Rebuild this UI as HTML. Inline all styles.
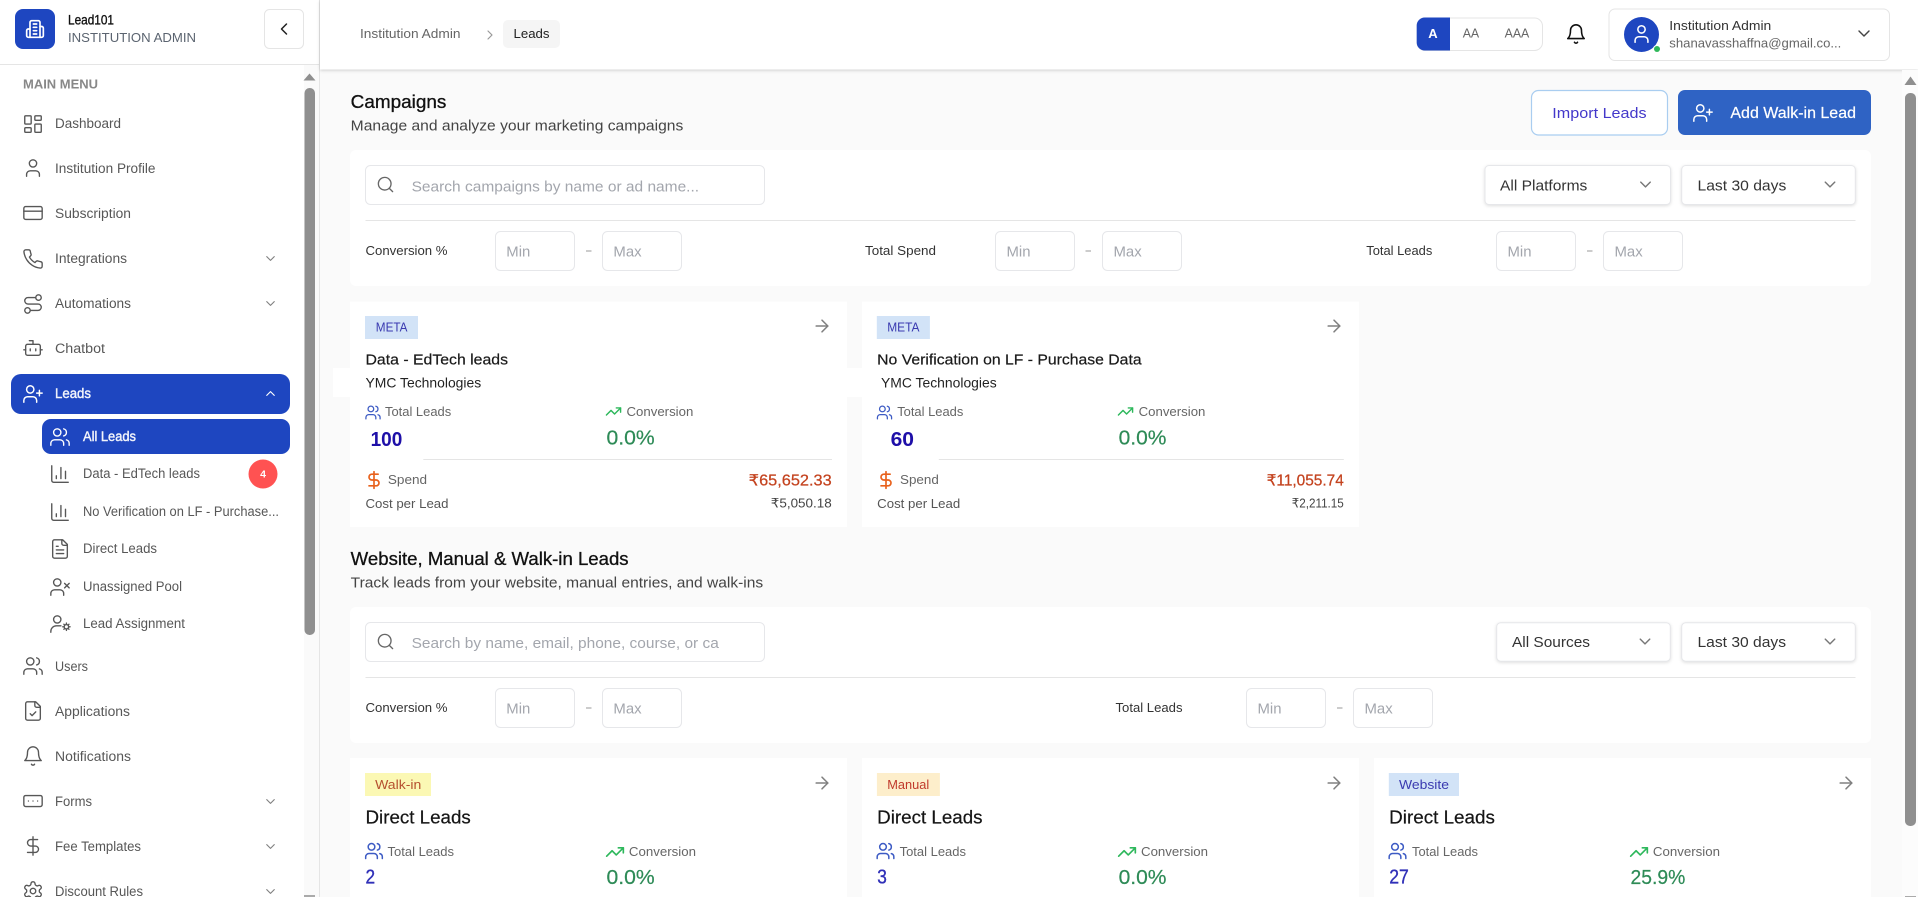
<!DOCTYPE html>
<html lang="en"><head><meta charset="utf-8"><title>Leads</title>
<style>
html,body{margin:0;padding:0;background:#fafafa;width:1918px;height:897px;overflow:hidden}
svg{display:block;font-family:"Liberation Sans",Arial,sans-serif}
text{dominant-baseline:central;white-space:pre}
.ic{fill:none;stroke-linecap:round;stroke-linejoin:round}
.nav{font-size:13.5px;fill:#575757}
.side{stroke:#575757;stroke-width:1.5}
.chev{stroke:#808080;stroke-width:1.8}
.box{fill:#fff;stroke:#e6e7ea;stroke-width:1}
.sel{fill:#fff;stroke:#e6e7ea;stroke-width:1;filter:drop-shadow(0 1px 1.5px rgba(0,0,0,.13))}
.lab{font-size:13px;fill:#333}
.ph{font-size:14.5px;fill:#a3a6ad}
.stat{font-size:13px;fill:#666}
.conv{font-size:20px;fill:#2e8b57;stroke:#2e8b57;stroke-width:.2}
.val{font-size:20px;fill:#3030b8;stroke:#3030b8;stroke-width:.35}
.h2{font-size:18px;fill:#111;stroke:#111;stroke-width:.3}
.sub{font-size:15px;fill:#444}
.ct{font-size:15px;fill:#1a1a1a;stroke:#1a1a1a;stroke-width:.2}
.dl{font-size:18px;fill:#151515;stroke:#151515;stroke-width:.2}
.amt{font-size:15.5px;fill:#c4431f;stroke:#c4431f;stroke-width:.25}
.blue{stroke:#3d5bc4;stroke-width:1.8}
.green{stroke:#2eb85c;stroke-width:2}
.gray{stroke:#808080;stroke-width:1.8}
.orange{stroke:#e8611c;stroke-width:2}
</style></head><body>
<svg xmlns="http://www.w3.org/2000/svg" width="1918" height="897" viewBox="0 0 1918 897">
<defs>
<symbol id="dash" viewBox="0 0 24 24"><rect x="3" y="3" width="7" height="9" rx="1"/><rect x="14" y="3" width="7" height="5" rx="1"/><rect x="14" y="12" width="7" height="9" rx="1"/><rect x="3" y="16" width="7" height="5" rx="1"/></symbol>
<symbol id="user" viewBox="0 0 24 24"><path d="M19 21v-2a4 4 0 0 0-4-4H9a4 4 0 0 0-4 4v2"/><circle cx="12" cy="7" r="4"/></symbol>
<symbol id="card" viewBox="0 0 24 24"><rect x="2" y="5" width="20" height="14" rx="2"/><path d="M2 10h20"/></symbol>
<symbol id="phone" viewBox="0 0 24 24"><path d="M22 16.92v3a2 2 0 0 1-2.18 2 19.79 19.79 0 0 1-8.63-3.07 19.5 19.5 0 0 1-6-6 19.79 19.79 0 0 1-3.07-8.67A2 2 0 0 1 4.11 2h3a2 2 0 0 1 2 1.72 12.84 12.84 0 0 0 .7 2.81 2 2 0 0 1-.45 2.11L8.09 9.91a16 16 0 0 0 6 6l1.27-1.27a2 2 0 0 1 2.11-.45 12.84 12.84 0 0 0 2.81.7A2 2 0 0 1 22 16.92z"/></symbol>
<symbol id="route" viewBox="0 0 24 24"><circle cx="6" cy="19" r="3"/><path d="M9 19h8.5a3.5 3.5 0 0 0 0-7h-11a3.5 3.5 0 0 1 0-7H15"/><circle cx="18" cy="5" r="3"/></symbol>
<symbol id="bot" viewBox="0 0 24 24"><path d="M12 8V4H8"/><rect x="4" y="8" width="16" height="12" rx="2"/><path d="M2 14h2M20 14h2M15 13v2M9 13v2"/></symbol>
<symbol id="uplus" viewBox="0 0 24 24"><path d="M16 21v-2a4 4 0 0 0-4-4H6a4 4 0 0 0-4 4v2"/><circle cx="9" cy="7" r="4"/><path d="M19 8v6M22 11h-6"/></symbol>
<symbol id="users" viewBox="0 0 24 24"><path d="M16 21v-2a4 4 0 0 0-4-4H6a4 4 0 0 0-4 4v2"/><circle cx="9" cy="7" r="4"/><path d="M22 21v-2a4 4 0 0 0-3-3.87"/><path d="M16 3.13a4 4 0 0 1 0 7.75"/></symbol>
<symbol id="chart" viewBox="0 0 24 24"><path d="M3 3v16a2 2 0 0 0 2 2h16"/><path d="M18 17V9M13 17V5M8 17v-3"/></symbol>
<symbol id="file" viewBox="0 0 24 24"><path d="M15 2H6a2 2 0 0 0-2 2v16a2 2 0 0 0 2 2h12a2 2 0 0 0 2-2V7Z"/><path d="M14 2v4a2 2 0 0 0 2 2h4"/><path d="M10 9H8M16 13H8M16 17H8"/></symbol>
<symbol id="filec" viewBox="0 0 24 24"><path d="M15 2H6a2 2 0 0 0-2 2v16a2 2 0 0 0 2 2h12a2 2 0 0 0 2-2V7Z"/><path d="M14 2v4a2 2 0 0 0 2 2h4"/><path d="m9 15 2 2 4-4"/></symbol>
<symbol id="ux" viewBox="0 0 24 24"><path d="M16 21v-2a4 4 0 0 0-4-4H6a4 4 0 0 0-4 4v2"/><circle cx="9" cy="7" r="4"/><path d="m17 8 5 5M22 8l-5 5"/></symbol>
<symbol id="ucog" viewBox="0 0 24 24"><path d="M2 21v-1a6 6 0 0 1 6-6h5"/><circle cx="9" cy="7" r="4"/><circle cx="19" cy="15" r="2.4"/><path d="M19 11v1.2M19 17.8V19M15 15h1.2M21.8 15H23M16.2 12.2l.9.9M20.9 16.9l.9.9M16.2 17.8l.9-.9M20.9 13.1l.9-.9"/></symbol>
<symbol id="bell" viewBox="0 0 24 24"><path d="M6 8a6 6 0 0 1 12 0c0 7 3 9 3 9H3s3-2 3-9"/><path d="M10.3 21a1.94 1.94 0 0 0 3.4 0"/></symbol>
<symbol id="form" viewBox="0 0 24 24"><rect x="2" y="6" width="20" height="12" rx="2"/><path d="M12 12h.01M17 12h.01M7 12h.01"/></symbol>
<symbol id="dollar" viewBox="0 0 24 24"><path d="M12 2v20"/><path d="M17 5H9.5a3.5 3.5 0 0 0 0 7h5a3.5 3.5 0 0 1 0 7H6"/></symbol>
<symbol id="cog" viewBox="0 0 24 24"><path d="M12.22 2h-.44a2 2 0 0 0-2 2v.18a2 2 0 0 1-1 1.73l-.43.25a2 2 0 0 1-2 0l-.15-.08a2 2 0 0 0-2.73.73l-.22.38a2 2 0 0 0 .73 2.73l.15.1a2 2 0 0 1 1 1.72v.51a2 2 0 0 1-1 1.74l-.15.09a2 2 0 0 0-.73 2.73l.22.38a2 2 0 0 0 2.73.73l.15-.08a2 2 0 0 1 2 0l.43.25a2 2 0 0 1 1 1.73V20a2 2 0 0 0 2 2h.44a2 2 0 0 0 2-2v-.18a2 2 0 0 1 1-1.73l.43-.25a2 2 0 0 1 2 0l.15.08a2 2 0 0 0 2.73-.73l.22-.39a2 2 0 0 0-.73-2.73l-.15-.08a2 2 0 0 1-1-1.74v-.5a2 2 0 0 1 1-1.74l.15-.09a2 2 0 0 0 .73-2.73l-.22-.38a2 2 0 0 0-2.73-.73l-.15.08a2 2 0 0 1-2 0l-.43-.25a2 2 0 0 1-1-1.73V4a2 2 0 0 0-2-2z"/><circle cx="12" cy="12" r="3"/></symbol>
<symbol id="build" viewBox="0 0 24 24"><path d="M6 22V4a2 2 0 0 1 2-2h8a2 2 0 0 1 2 2v18Z"/><path d="M6 12H4a2 2 0 0 0-2 2v6a2 2 0 0 0 2 2h2"/><path d="M18 9h2a2 2 0 0 1 2 2v9a2 2 0 0 1-2 2h-2"/><path d="M10 6h4M10 10h4M10 14h4M10 18h4"/></symbol>
<symbol id="trend" viewBox="0 0 24 24"><path d="M22 7l-8.5 8.5-5-5L2 17"/><path d="M16 7h6v6"/></symbol>
<symbol id="arrow" viewBox="0 0 24 24"><path d="M5 12h14"/><path d="m12 5 7 7-7 7"/></symbol>
<symbol id="search" viewBox="0 0 24 24"><circle cx="11" cy="11" r="8"/><path d="m21 21-4.3-4.3"/></symbol>
<symbol id="cd" viewBox="0 0 24 24"><path d="m6 9 6 6 6-6"/></symbol>
<symbol id="cu" viewBox="0 0 24 24"><path d="m18 15-6-6-6 6"/></symbol>
<symbol id="cl" viewBox="0 0 24 24"><path d="m15 18-6-6 6-6"/></symbol>
<symbol id="cr" viewBox="0 0 24 24"><path d="m9 18 6-6-6-6"/></symbol>
</defs>

<rect width="1918" height="897" fill="#fafafa"/>

<!-- SIDEBAR -->
<rect x="0" y="0" width="319" height="897" fill="#fff"/>
<rect x="319" y="0" width="1" height="897" fill="#e5e5e5"/>
<rect x="0" y="64" width="319" height="1" fill="#e5e5e5"/>
<rect x="15" y="9" width="40" height="40" rx="8" fill="#1e46c0"/>
<use href="#build" x="25" y="19" width="20" height="20" class="ic" stroke="#fff" stroke-width="2"/>
<text x="68" y="19.5" textLength="46" lengthAdjust="spacingAndGlyphs" font-size="14" fill="#111" stroke="#111" stroke-width=".35">Lead101</text>
<text x="68" y="37.5" textLength="128" lengthAdjust="spacingAndGlyphs" font-size="13" fill="#5b6470">INSTITUTION ADMIN</text>
<rect x="264.5" y="9.5" width="39" height="39" rx="5" fill="#fff" stroke="#e5e5e5"/>
<use href="#cl" x="274" y="19" width="20" height="20" class="ic" stroke="#222" stroke-width="1.8"/>

<text x="23" y="84.5" textLength="75" lengthAdjust="spacingAndGlyphs" font-size="12.5" font-weight="700" fill="#888">MAIN MENU</text>

<rect x="304" y="65" width="15" height="832" fill="#fafafa"/>
<path d="M303.5 80.5l6-7 6 7z" fill="#8f8f8f"/>
<rect x="304.5" y="88" width="10.5" height="547" rx="5" fill="#8f8f8f"/>
<path d="M304 897v-2h11v2z" fill="#aaa"/>

<use href="#dash" x="22" y="113" width="22" height="22" class="ic side"/>
<text x="55" y="123.5" textLength="66" lengthAdjust="spacingAndGlyphs" class="nav">Dashboard</text>
<use href="#user" x="22" y="157" width="22" height="22" class="ic side"/>
<text x="55" y="168.5" textLength="100.5" lengthAdjust="spacingAndGlyphs" class="nav">Institution Profile</text>
<use href="#card" x="22" y="202" width="22" height="22" class="ic side"/>
<text x="55" y="213.5" textLength="76" lengthAdjust="spacingAndGlyphs" class="nav">Subscription</text>
<use href="#phone" x="22" y="248" width="22" height="22" class="ic side"/>
<text x="55" y="258.5" textLength="72" lengthAdjust="spacingAndGlyphs" class="nav">Integrations</text>
<use href="#cd" x="263" y="251" width="15" height="15" class="ic chev"/>
<use href="#route" x="22" y="293" width="22" height="22" class="ic side"/>
<text x="55" y="303.5" textLength="76" lengthAdjust="spacingAndGlyphs" class="nav">Automations</text>
<use href="#cd" x="263" y="296" width="15" height="15" class="ic chev"/>
<use href="#bot" x="22" y="337" width="22" height="22" class="ic side"/>
<text x="55" y="348.5" textLength="50" lengthAdjust="spacingAndGlyphs" class="nav">Chatbot</text>

<rect x="11" y="374" width="279" height="40" rx="10" fill="#1e46c0"/>
<use href="#uplus" x="22" y="383" width="22" height="22" class="ic" stroke="#fff" stroke-width="1.6"/>
<text x="55" y="393.5" textLength="36" lengthAdjust="spacingAndGlyphs" font-size="13.5" fill="#f2f4fb" stroke="#f2f4fb" stroke-width=".4">Leads</text>
<use href="#cu" x="263" y="386" width="15" height="15" class="ic" stroke="#fff" stroke-width="1.8"/>

<rect x="42" y="419" width="248" height="35" rx="9" fill="#1e46c0"/>
<use href="#users" x="49" y="426" width="22" height="22" class="ic" stroke="#fff" stroke-width="1.5"/>
<text x="83" y="436.5" textLength="53" lengthAdjust="spacingAndGlyphs" font-size="13.5" fill="#f2f4fb" stroke="#f2f4fb" stroke-width=".4">All Leads</text>

<use href="#chart" x="49" y="463" width="22" height="22" class="ic side"/>
<text x="83" y="473.5" textLength="117" lengthAdjust="spacingAndGlyphs" class="nav">Data - EdTech leads</text>
<circle cx="263" cy="474" r="14.5" fill="#ff5252"/>
<text x="263" y="474.5" text-anchor="middle" font-size="10.5" font-weight="700" fill="#fff">4</text>
<use href="#chart" x="49" y="501" width="22" height="22" class="ic side"/>
<text x="83" y="511.5" textLength="196" lengthAdjust="spacingAndGlyphs" class="nav">No Verification on LF - Purchase...</text>
<use href="#file" x="49" y="538" width="22" height="22" class="ic side"/>
<text x="83" y="548.5" textLength="74" lengthAdjust="spacingAndGlyphs" class="nav">Direct Leads</text>
<use href="#ux" x="49" y="576" width="22" height="22" class="ic side"/>
<text x="83" y="586.5" textLength="99" lengthAdjust="spacingAndGlyphs" class="nav">Unassigned Pool</text>
<use href="#ucog" x="49" y="613" width="22" height="22" class="ic side"/>
<text x="83" y="623.5" textLength="102" lengthAdjust="spacingAndGlyphs" class="nav">Lead Assignment</text>

<use href="#users" x="22" y="655" width="22" height="22" class="ic side"/>
<text x="55" y="666.5" textLength="33" lengthAdjust="spacingAndGlyphs" class="nav">Users</text>
<use href="#filec" x="22" y="700" width="22" height="22" class="ic side"/>
<text x="55" y="711.5" textLength="75" lengthAdjust="spacingAndGlyphs" class="nav">Applications</text>
<use href="#bell" x="22" y="745" width="22" height="22" class="ic side"/>
<text x="55" y="756.5" textLength="76" lengthAdjust="spacingAndGlyphs" class="nav">Notifications</text>
<use href="#form" x="22" y="790" width="22" height="22" class="ic side"/>
<text x="55" y="801.5" textLength="37" lengthAdjust="spacingAndGlyphs" class="nav">Forms</text>
<use href="#cd" x="263" y="794" width="15" height="15" class="ic chev"/>
<use href="#dollar" x="22" y="835" width="22" height="22" class="ic side"/>
<text x="55" y="846.5" textLength="86" lengthAdjust="spacingAndGlyphs" class="nav">Fee Templates</text>
<use href="#cd" x="263" y="839" width="15" height="15" class="ic chev"/>
<use href="#cog" x="22" y="880" width="22" height="22" class="ic side"/>
<text x="55" y="891.5" textLength="88" lengthAdjust="spacingAndGlyphs" class="nav">Discount Rules</text>
<use href="#cd" x="263" y="884" width="15" height="15" class="ic chev"/>

<!-- HEADER -->
<rect x="320" y="0" width="1598" height="69.5" fill="#fff" style="filter:drop-shadow(0 1px 1.5px rgba(0,0,0,.18))"/>
<text x="360" y="33.5" textLength="100.5" lengthAdjust="spacingAndGlyphs" font-size="13" fill="#666">Institution Admin</text>
<use href="#cr" x="482" y="27" width="16" height="16" class="ic" stroke="#999" stroke-width="1.8"/>
<rect x="503" y="20" width="57" height="28" rx="5" fill="#f5f5f5"/>
<text x="513.5" y="33.5" textLength="36" lengthAdjust="spacingAndGlyphs" font-size="13" fill="#222">Leads</text>

<rect x="1417" y="18" width="125.5" height="32.5" rx="8" fill="#fff" stroke="#e5e5e5"/>
<path d="M1450 17.5H1424.7a8 8 0 0 0-8 8V42.5a8 8 0 0 0 8 8H1450Z" fill="#1e46c0"/>
<text x="1433" y="33.5" text-anchor="middle" font-size="13" font-weight="700" fill="#fff">A</text>
<text x="1462.7" y="33.5" textLength="16.5" lengthAdjust="spacingAndGlyphs" font-size="12.5" fill="#666">AA</text>
<text x="1504.6" y="33.5" textLength="24.7" lengthAdjust="spacingAndGlyphs" font-size="12.5" fill="#666">AAA</text>
<use href="#bell" x="1565" y="23" width="22" height="22" class="ic" stroke="#111" stroke-width="1.7"/>
<rect x="1609" y="9" width="280.5" height="51.5" rx="6" fill="#fff" stroke="#e5e5e5"/>
<circle cx="1641.5" cy="34.5" r="17.5" fill="#1e46c0"/>
<use href="#user" x="1630.5" y="23" width="22" height="22" class="ic" stroke="#fff" stroke-width="1.7"/>
<circle cx="1657" cy="49" r="4" fill="#fff"/><circle cx="1657" cy="49" r="3" fill="#2fb85a"/>
<text x="1669.3" y="25.5" textLength="102" lengthAdjust="spacingAndGlyphs" font-size="13" fill="#333">Institution Admin</text>
<text x="1669.3" y="43" textLength="172" lengthAdjust="spacingAndGlyphs" font-size="13" fill="#666">shanavasshaffna@gmail.co...</text>
<use href="#cd" x="1854" y="23.5" width="20" height="20" class="ic" stroke="#444" stroke-width="1.7"/>

<!-- RIGHT SCROLLBAR -->
<rect x="1902" y="70" width="16" height="827" fill="#fcfcfc"/>
<path d="M1904.5 85l6-8.5 6 8.5z" fill="#8f8f8f"/>
<rect x="1905" y="93" width="11" height="733" rx="5" fill="#8f8f8f"/>
<path d="M1905 897v-1h11v1z" fill="#aaa"/>

<!-- CAMPAIGNS -->
<text x="350.7" y="102" textLength="95.7" lengthAdjust="spacingAndGlyphs" class="h2">Campaigns</text>
<text x="350.7" y="126" textLength="332.6" lengthAdjust="spacingAndGlyphs" class="sub">Manage and analyze your marketing campaigns</text>

<rect x="1531.5" y="90.5" width="136" height="44.5" rx="7" fill="#fff" stroke="#a9cdf0" stroke-width="1.2"/>
<text x="1552.3" y="113.5" textLength="94.3" lengthAdjust="spacingAndGlyphs" font-size="15" fill="#4338ca">Import Leads</text>
<rect x="1678" y="90" width="193" height="45" rx="7" fill="#2f63c4"/>
<use href="#uplus" x="1692" y="102" width="22" height="22" class="ic" stroke="#fff" stroke-width="1.6"/>
<text x="1730.4" y="113.5" textLength="125.6" lengthAdjust="spacingAndGlyphs" font-size="15.5" fill="#fff" stroke="#fff" stroke-width=".2">Add Walk-in Lead</text>

<rect x="350" y="150" width="1521" height="136" rx="6" fill="#fff"/>
<rect x="365.5" y="165.5" width="399" height="39" rx="5" class="box"/>
<use href="#search" x="376" y="175" width="19" height="19" class="ic" stroke="#666" stroke-width="1.7"/>
<text x="411.6" y="187" textLength="287.5" lengthAdjust="spacingAndGlyphs" class="ph" style="font-size:15px">Search campaigns by name or ad name...</text>

<rect x="1485" y="165.5" width="185.5" height="39" rx="4" class="sel"/>
<text x="1500" y="186" textLength="87.3" lengthAdjust="spacingAndGlyphs" font-size="15" fill="#333">All Platforms</text>
<use href="#cd" x="1636" y="175" width="19" height="19" class="ic" stroke="#777" stroke-width="1.8"/>
<rect x="1681.7" y="165.5" width="173.6" height="39" rx="4" class="sel"/>
<text x="1697.5" y="186" textLength="88.8" lengthAdjust="spacingAndGlyphs" font-size="15" fill="#333">Last 30 days</text>
<use href="#cd" x="1820.5" y="175" width="19" height="19" class="ic" stroke="#777" stroke-width="1.8"/>

<rect x="365.5" y="220" width="1490" height="1" fill="#e5e5e5"/>

<text x="365.5" y="250.5" textLength="82" lengthAdjust="spacingAndGlyphs" class="lab">Conversion %</text>
<rect x="495.5" y="231.5" width="79" height="39" rx="5" class="box"/>
<text x="506.3" y="252.5" textLength="24" lengthAdjust="spacingAndGlyphs" class="ph">Min</text>
<rect x="586" y="250.5" width="5.5" height="1" fill="#999"/>
<rect x="602.5" y="231.5" width="79" height="39" rx="5" class="box"/>
<text x="613.4" y="252.5" textLength="28.2" lengthAdjust="spacingAndGlyphs" class="ph">Max</text>

<text x="865" y="250.5" textLength="71" lengthAdjust="spacingAndGlyphs" class="lab">Total Spend</text>
<rect x="995.5" y="231.5" width="79" height="39" rx="5" class="box"/>
<text x="1006.5" y="252.5" textLength="24" lengthAdjust="spacingAndGlyphs" class="ph">Min</text>
<rect x="1085.5" y="250.5" width="5.5" height="1" fill="#999"/>
<rect x="1102.5" y="231.5" width="79" height="39" rx="5" class="box"/>
<text x="1113.5" y="252.5" textLength="28.2" lengthAdjust="spacingAndGlyphs" class="ph">Max</text>

<text x="1366.3" y="250.5" textLength="66" lengthAdjust="spacingAndGlyphs" class="lab">Total Leads</text>
<rect x="1496.5" y="231.5" width="79" height="39" rx="5" class="box"/>
<text x="1507.5" y="252.5" textLength="24" lengthAdjust="spacingAndGlyphs" class="ph">Min</text>
<rect x="1587" y="250.5" width="5.5" height="1" fill="#999"/>
<rect x="1603.5" y="231.5" width="79" height="39" rx="5" class="box"/>
<text x="1614.5" y="252.5" textLength="28.2" lengthAdjust="spacingAndGlyphs" class="ph">Max</text>

<!-- Campaign cards -->
<rect x="333" y="368" width="529" height="29" fill="#fff"/>
<rect x="350" y="301.5" width="497" height="225.5" fill="#fff"/>
<rect x="365" y="316" width="53" height="23" fill="#d2e3f7"/>
<text x="375.8" y="327.5" textLength="31.7" lengthAdjust="spacingAndGlyphs" font-size="12.5" fill="#3a3ab0">META</text>
<use href="#arrow" x="812" y="316" width="20" height="20" class="ic gray"/>
<text x="365.5" y="360" textLength="142.5" lengthAdjust="spacingAndGlyphs" class="ct">Data - EdTech leads</text>
<text x="365.5" y="382.5" textLength="115.7" lengthAdjust="spacingAndGlyphs" font-size="14" fill="#222">YMC Technologies</text>
<use href="#users" x="364.5" y="404" width="17" height="17" class="ic blue"/>
<text x="385" y="411.5" textLength="66.2" lengthAdjust="spacingAndGlyphs" class="stat">Total Leads</text>
<use href="#trend" x="605" y="403" width="17" height="17" class="ic green"/>
<text x="626.5" y="411.5" textLength="66.8" lengthAdjust="spacingAndGlyphs" class="stat">Conversion</text>
<text x="370.6" y="440" textLength="31.7" lengthAdjust="spacingAndGlyphs" font-size="20" font-weight="700" fill="#1e0fa8">100</text>
<text x="606.5" y="438.5" textLength="48.2" lengthAdjust="spacingAndGlyphs" class="conv">0.0%</text>
<rect x="423.3" y="459" width="408.7" height="1" fill="#e5e5e5"/>
<use href="#dollar" x="364" y="470" width="20" height="20" class="ic orange"/>
<text x="387.9" y="479.5" textLength="39.2" lengthAdjust="spacingAndGlyphs" class="stat">Spend</text>
<text x="748.7" y="481" textLength="83" lengthAdjust="spacingAndGlyphs" class="amt">₹65,652.33</text>
<text x="365.5" y="503.5" textLength="83" lengthAdjust="spacingAndGlyphs" font-size="13" fill="#555">Cost per Lead</text>
<text x="770.8" y="503" textLength="60.9" lengthAdjust="spacingAndGlyphs" font-size="13" fill="#444">₹5,050.18</text>

<rect x="862" y="301.5" width="497" height="225.5" fill="#fff"/>
<rect x="876.8" y="316" width="53.1" height="23" fill="#d2e3f7"/>
<text x="887.2" y="327.5" textLength="32.3" lengthAdjust="spacingAndGlyphs" font-size="12.5" fill="#3a3ab0">META</text>
<use href="#arrow" x="1324" y="316" width="20" height="20" class="ic gray"/>
<text x="877.2" y="360" textLength="264.4" lengthAdjust="spacingAndGlyphs" class="ct">No Verification on LF - Purchase Data</text>
<text x="881" y="382.5" textLength="115.7" lengthAdjust="spacingAndGlyphs" font-size="14" fill="#222">YMC Technologies</text>
<use href="#users" x="876" y="404" width="17" height="17" class="ic blue"/>
<text x="897.2" y="411.5" textLength="66.1" lengthAdjust="spacingAndGlyphs" class="stat">Total Leads</text>
<use href="#trend" x="1117" y="403" width="17" height="17" class="ic green"/>
<text x="1138.6" y="411.5" textLength="66.8" lengthAdjust="spacingAndGlyphs" class="stat">Conversion</text>
<text x="890.6" y="440" textLength="23.4" lengthAdjust="spacingAndGlyphs" font-size="20" font-weight="700" fill="#1e0fa8">60</text>
<text x="1118.6" y="438.5" textLength="47.8" lengthAdjust="spacingAndGlyphs" class="conv">0.0%</text>
<rect x="938.8" y="459" width="405" height="1" fill="#e5e5e5"/>
<use href="#dollar" x="876" y="470" width="20" height="20" class="ic orange"/>
<text x="900" y="479.5" textLength="38.8" lengthAdjust="spacingAndGlyphs" class="stat">Spend</text>
<text x="1266.6" y="481" textLength="77.2" lengthAdjust="spacingAndGlyphs" class="amt">₹11,055.74</text>
<text x="877.2" y="503.5" textLength="83" lengthAdjust="spacingAndGlyphs" font-size="13" fill="#555">Cost per Lead</text>
<text x="1291.8" y="503" textLength="52" lengthAdjust="spacingAndGlyphs" font-size="13" fill="#444">₹2,211.15</text>

<!-- WEBSITE SECTION -->
<text x="350.7" y="559" textLength="277.9" lengthAdjust="spacingAndGlyphs" class="h2">Website, Manual &amp; Walk-in Leads</text>
<text x="350.7" y="583" textLength="412.5" lengthAdjust="spacingAndGlyphs" class="sub">Track leads from your website, manual entries, and walk-ins</text>

<rect x="350" y="607" width="1521" height="136" rx="6" fill="#fff"/>
<rect x="365.5" y="622.5" width="399" height="39" rx="5" class="box"/>
<use href="#search" x="376" y="632" width="19" height="19" class="ic" stroke="#666" stroke-width="1.7"/>
<text x="411.6" y="643.5" textLength="307.2" lengthAdjust="spacingAndGlyphs" class="ph" style="font-size:15px">Search by name, email, phone, course, or ca</text>
<rect x="1496.7" y="622.7" width="173.6" height="38.5" rx="4" class="sel"/>
<text x="1512" y="642.5" textLength="78" lengthAdjust="spacingAndGlyphs" font-size="15" fill="#333">All Sources</text>
<use href="#cd" x="1635.5" y="632" width="19" height="19" class="ic" stroke="#777" stroke-width="1.8"/>
<rect x="1681.7" y="622.7" width="173.6" height="38.5" rx="4" class="sel"/>
<text x="1697.5" y="642.5" textLength="88.5" lengthAdjust="spacingAndGlyphs" font-size="15" fill="#333">Last 30 days</text>
<use href="#cd" x="1820.5" y="632" width="19" height="19" class="ic" stroke="#777" stroke-width="1.8"/>
<rect x="365.5" y="677" width="1490" height="1" fill="#e5e5e5"/>

<text x="365.5" y="707.5" textLength="82" lengthAdjust="spacingAndGlyphs" class="lab">Conversion %</text>
<rect x="495.5" y="688.5" width="79" height="39" rx="5" class="box"/>
<text x="506.3" y="709.5" textLength="24" lengthAdjust="spacingAndGlyphs" class="ph">Min</text>
<rect x="586" y="707.5" width="5.5" height="1" fill="#999"/>
<rect x="602.5" y="688.5" width="79" height="39" rx="5" class="box"/>
<text x="613.4" y="709.5" textLength="28.2" lengthAdjust="spacingAndGlyphs" class="ph">Max</text>

<text x="1115.5" y="707.5" textLength="67" lengthAdjust="spacingAndGlyphs" class="lab">Total Leads</text>
<rect x="1246.5" y="688.5" width="79" height="39" rx="5" class="box"/>
<text x="1257.5" y="709.5" textLength="24" lengthAdjust="spacingAndGlyphs" class="ph">Min</text>
<rect x="1337" y="707.5" width="5.5" height="1" fill="#999"/>
<rect x="1353.5" y="688.5" width="79" height="39" rx="5" class="box"/>
<text x="1364.5" y="709.5" textLength="28.2" lengthAdjust="spacingAndGlyphs" class="ph">Max</text>

<!-- Direct cards -->
<rect x="350" y="758" width="497" height="139" fill="#fff"/>
<rect x="365" y="773" width="66" height="23" fill="#fbf8b4"/>
<text x="375.1" y="784.5" textLength="46.2" lengthAdjust="spacingAndGlyphs" font-size="13" fill="#b5502f">Walk-in</text>
<use href="#arrow" x="812" y="773" width="20" height="20" class="ic gray"/>
<text x="365.5" y="817.5" textLength="105.3" lengthAdjust="spacingAndGlyphs" class="dl">Direct Leads</text>
<use href="#users" x="364" y="841" width="20" height="20" class="ic blue"/>
<text x="387.5" y="851.5" textLength="66.5" lengthAdjust="spacingAndGlyphs" class="stat">Total Leads</text>
<use href="#trend" x="605" y="842" width="20" height="20" class="ic green"/>
<text x="628.9" y="851.5" textLength="67.1" lengthAdjust="spacingAndGlyphs" class="stat">Conversion</text>
<text x="365.5" y="877.5" textLength="9.6" lengthAdjust="spacingAndGlyphs" class="val">2</text>
<text x="606.5" y="878" textLength="48.2" lengthAdjust="spacingAndGlyphs" class="conv">0.0%</text>

<rect x="862" y="758" width="497" height="139" fill="#fff"/>
<rect x="876.9" y="773" width="63" height="23" fill="#fdeecb"/>
<text x="887.2" y="784.5" textLength="42" lengthAdjust="spacingAndGlyphs" font-size="13" fill="#c0392b">Manual</text>
<use href="#arrow" x="1324" y="773" width="20" height="20" class="ic gray"/>
<text x="877.2" y="817.5" textLength="105.4" lengthAdjust="spacingAndGlyphs" class="dl">Direct Leads</text>
<use href="#users" x="875.5" y="841" width="20" height="20" class="ic blue"/>
<text x="899.6" y="851.5" textLength="66.4" lengthAdjust="spacingAndGlyphs" class="stat">Total Leads</text>
<use href="#trend" x="1117" y="842" width="20" height="20" class="ic green"/>
<text x="1141" y="851.5" textLength="67" lengthAdjust="spacingAndGlyphs" class="stat">Conversion</text>
<text x="877.2" y="877.5" textLength="9.6" lengthAdjust="spacingAndGlyphs" class="val">3</text>
<text x="1118.6" y="878" textLength="47.9" lengthAdjust="spacingAndGlyphs" class="conv">0.0%</text>

<rect x="1374" y="758" width="497" height="139" fill="#fff"/>
<rect x="1388.8" y="773" width="70.2" height="23" fill="#d2e3f7"/>
<text x="1399" y="784.5" textLength="50" lengthAdjust="spacingAndGlyphs" font-size="13" fill="#3a3ab0">Website</text>
<use href="#arrow" x="1836" y="773" width="20" height="20" class="ic gray"/>
<text x="1389.2" y="817.5" textLength="105.7" lengthAdjust="spacingAndGlyphs" class="dl">Direct Leads</text>
<use href="#users" x="1387.5" y="841" width="20" height="20" class="ic blue"/>
<text x="1412" y="851.5" textLength="66" lengthAdjust="spacingAndGlyphs" class="stat">Total Leads</text>
<use href="#trend" x="1629" y="842" width="20" height="20" class="ic green"/>
<text x="1652.9" y="851.5" textLength="67.1" lengthAdjust="spacingAndGlyphs" class="stat">Conversion</text>
<text x="1389.2" y="877.5" textLength="19.6" lengthAdjust="spacingAndGlyphs" class="val">27</text>
<text x="1630.5" y="878" textLength="54.8" lengthAdjust="spacingAndGlyphs" class="conv">25.9%</text>
</svg>
</body></html>
